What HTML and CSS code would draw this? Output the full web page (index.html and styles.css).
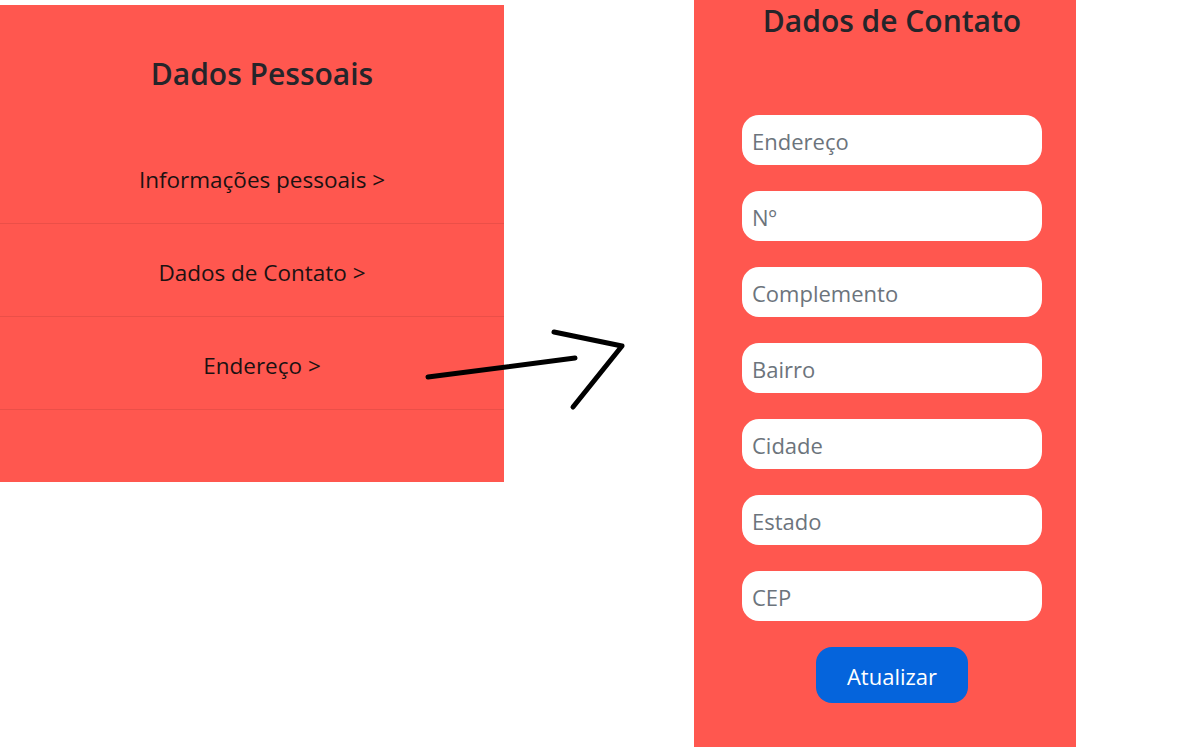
FILE: index.html
```html
<!DOCTYPE html>
<html lang="pt-BR">
<head>
<meta charset="utf-8">
<title>Dados</title>
<link rel="stylesheet" href="styles.css">
</head>
<body>
<div class="page">
  <section class="menu-panel">
    <h2 class="menu-title">Dados Pessoais</h2>
    <ul class="menu-list">
      <li class="menu-item">Informações pessoais &gt;</li>
      <li class="menu-item">Dados de Contato &gt;</li>
      <li class="menu-item">Endereço &gt;</li>
    </ul>
  </section>
  <section class="form-panel">
    <h2 class="form-title">Dados de Contato</h2>
    <form class="form">
      <input class="field" type="text" placeholder="Endereço">
      <input class="field" type="text" placeholder="Nº">
      <input class="field" type="text" placeholder="Complemento">
      <input class="field" type="text" placeholder="Bairro">
      <input class="field" type="text" placeholder="Cidade">
      <input class="field" type="text" placeholder="Estado">
      <input class="field" type="text" placeholder="CEP">
      <button class="submit" type="button">Atualizar</button>
    </form>
  </section>
  <svg class="scribble" width="1185" height="747" viewBox="0 0 1185 747" aria-hidden="true">
    <path d="M428 377 L575 358" />
    <path d="M554 332 L622 346 L573 407" />
  </svg>
</div>
</body>
</html>
```
FILE: styles.css
```css
* { box-sizing: border-box; }
html, body { margin: 0; padding: 0; background: #fff; }
body {
  font-family: "Open Sans", "Noto Sans", sans-serif;
  color: #212529;
  width: 1185px;
  height: 747px;
  overflow: hidden;
}
.page {
  position: relative;
  display: flex;
  align-items: flex-start;
  gap: 190px;
  height: 747px;
}
.menu-panel {
  margin-top: 5px;
  width: 504px;
  height: 477px;
  background: #ff574f;
  padding-left: 20px;
}
.menu-title {
  margin: 0;
  height: 126px;
  padding-top: 49px;
  text-align: center;
  font-size: 30px;
  font-weight: 600;
  line-height: 40px;
  color: #25252a;
}
.menu-list {
  list-style: none;
  margin: 0 0 0 -20px;
  padding: 0;
}
.menu-item {
  height: 93px;
  border-bottom: 1px solid #eb4f48;
  display: flex;
  align-items: center;
  justify-content: center;
  font-size: 22.5px;
  color: #1c1212;
  padding-left: 20px;
  padding-top: 4px;
}
.form-panel {
  width: 382px;
  height: 760px;
  background: #ff574f;
  padding-left: 14px;
  display: flex;
  flex-direction: column;
  align-items: center;
}
.form-title {
  margin: 0;
  padding-top: 1px;
  font-size: 30px;
  font-weight: 600;
  line-height: 40px;
  color: #25252a;
}
.form {
  margin-top: 74px;
  display: flex;
  flex-direction: column;
  align-items: center;
  gap: 26px;
}
.field {
  width: 300px;
  height: 50px;
  border: none;
  border-radius: 17px;
  background: #fff;
  padding: 2px 10px 0;
  font-family: inherit;
  font-size: 22px;
  color: #212529;
  outline: none;
}
.field::placeholder { color: #6c747c; opacity: 1; }
.submit {
  width: 152px;
  height: 56px;
  border: none;
  border-radius: 16px;
  background: #0564dc;
  color: #fff;
  font-family: inherit;
  font-size: 22px;
  padding-top: 2px;
}
.scribble {
  position: absolute;
  left: 0;
  top: 0;
  pointer-events: none;
  fill: none;
  stroke: #000;
  stroke-width: 5;
  stroke-linecap: round;
  stroke-linejoin: round;
}
```
